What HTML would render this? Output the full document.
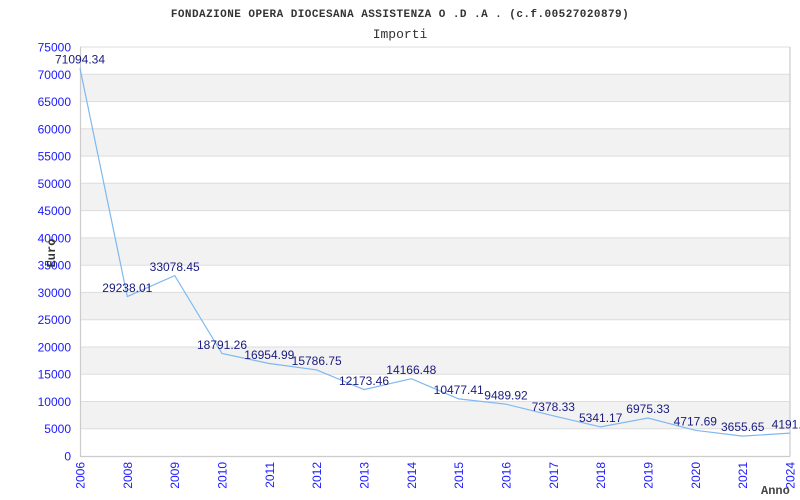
<!DOCTYPE html>
<html><head><meta charset="utf-8"><style>
html,body{margin:0;padding:0;background:#fff;width:800px;height:500px;overflow:hidden}
</style></head><body>
<svg width="800" height="500" xmlns="http://www.w3.org/2000/svg">
<rect width="800" height="500" fill="#fff"/>
<g fill="#f2f2f2">
<rect x="80" y="401.5" width="710" height="27.3"/>
<rect x="80" y="347" width="710" height="27.3"/>
<rect x="80" y="292.4" width="710" height="27.3"/>
<rect x="80" y="237.9" width="710" height="27.3"/>
<rect x="80" y="183.3" width="710" height="27.3"/>
<rect x="80" y="128.8" width="710" height="27.3"/>
<rect x="80" y="74.3" width="710" height="27.3"/>
</g>
<g stroke="#dddddd" stroke-width="1">
<line x1="80" y1="428.7" x2="790" y2="428.7"/><line x1="80" y1="401.5" x2="790" y2="401.5"/>
<line x1="80" y1="374.2" x2="790" y2="374.2"/><line x1="80" y1="347" x2="790" y2="347"/>
<line x1="80" y1="319.7" x2="790" y2="319.7"/><line x1="80" y1="292.4" x2="790" y2="292.4"/>
<line x1="80" y1="265.2" x2="790" y2="265.2"/><line x1="80" y1="237.9" x2="790" y2="237.9"/>
<line x1="80" y1="210.6" x2="790" y2="210.6"/><line x1="80" y1="183.3" x2="790" y2="183.3"/>
<line x1="80" y1="156.1" x2="790" y2="156.1"/><line x1="80" y1="128.8" x2="790" y2="128.8"/>
<line x1="80" y1="101.6" x2="790" y2="101.6"/><line x1="80" y1="74.3" x2="790" y2="74.3"/>
<line x1="80" y1="47" x2="790" y2="47"/>
</g>
<g stroke="#cccccc" stroke-width="1.2" fill="none">
<line x1="80.5" y1="47" x2="80.5" y2="456.5"/><line x1="80" y1="456.5" x2="790" y2="456.5"/><line x1="790" y1="47" x2="790" y2="456.5"/>
</g>
<polyline fill="none" stroke="#7fb8f0" stroke-width="1.2" points="80,68.3 127.3,296.6 174.7,275.6 222,353.5 269.3,363.5 316.7,369.9 364,389.6 411.3,378.7 458.7,398.9 506,404.2 553.3,415.8 600.7,426.9 648,418 695.3,430.3 742.7,436.1 790,433.1"/>
<g font-family="Liberation Sans, sans-serif" font-size="12" fill="#1a1a80" text-anchor="middle">
<text x="80" y="63.5">71094.34</text><text x="127.3" y="292">29238.01</text><text x="174.7" y="271">33078.45</text>
<text x="222" y="349">18791.26</text><text x="269.3" y="359">16954.99</text><text x="316.7" y="365">15786.75</text>
<text x="364" y="385">12173.46</text><text x="411.3" y="374">14166.48</text><text x="458.7" y="394">10477.41</text>
<text x="506" y="399.5">9489.92</text><text x="553.3" y="411">7378.33</text><text x="600.7" y="422">5341.17</text>
<text x="648" y="413">6975.33</text><text x="695.3" y="425.5">4717.69</text><text x="742.7" y="431">3655.65</text>
<text x="790" y="428.5">4191.4</text>
</g>
<g font-family="Liberation Sans, sans-serif" font-size="12" fill="#1a1aff" text-anchor="end">
<text x="71" y="460.5">0</text><text x="71" y="433">5000</text><text x="71" y="406">10000</text><text x="71" y="378.5">15000</text>
<text x="71" y="351.5">20000</text><text x="71" y="324">25000</text><text x="71" y="297">30000</text><text x="71" y="269.5">35000</text>
<text x="71" y="242.5">40000</text><text x="71" y="215">45000</text><text x="71" y="188">50000</text><text x="71" y="160.5">55000</text>
<text x="71" y="133.5">60000</text><text x="71" y="106">65000</text><text x="71" y="79">70000</text><text x="71" y="51.5">75000</text>
</g>
<g font-family="Liberation Sans, sans-serif" font-size="12" fill="#1a1aff" text-anchor="end">
<text transform="translate(84.5,462) rotate(-90)">2006</text>
<text transform="translate(131.8,462) rotate(-90)">2008</text>
<text transform="translate(179.2,462) rotate(-90)">2009</text>
<text transform="translate(226.5,462) rotate(-90)">2010</text>
<text transform="translate(273.8,462) rotate(-90)">2011</text>
<text transform="translate(321.2,462) rotate(-90)">2012</text>
<text transform="translate(368.5,462) rotate(-90)">2013</text>
<text transform="translate(415.8,462) rotate(-90)">2014</text>
<text transform="translate(463.2,462) rotate(-90)">2015</text>
<text transform="translate(510.5,462) rotate(-90)">2016</text>
<text transform="translate(557.8,462) rotate(-90)">2017</text>
<text transform="translate(605.2,462) rotate(-90)">2018</text>
<text transform="translate(652.5,462) rotate(-90)">2019</text>
<text transform="translate(699.8,462) rotate(-90)">2020</text>
<text transform="translate(747.2,462) rotate(-90)">2021</text>
<text transform="translate(794.5,462) rotate(-90)">2024</text>
</g>
<text x="400" y="17" text-anchor="middle" font-family="Liberation Mono, monospace" font-size="11" font-weight="bold" letter-spacing="0.45" fill="#333">FONDAZIONE OPERA DIOCESANA ASSISTENZA O .D .A . (c.f.00527020879)</text>
<text x="400" y="38" text-anchor="middle" font-family="Liberation Mono, monospace" font-size="13" fill="#333">Importi</text>
<text transform="translate(55,253) rotate(-90)" text-anchor="middle" font-family="Liberation Mono, monospace" font-size="12" font-weight="bold" fill="#333">Euro</text>
<text x="761" y="494" font-family="Liberation Mono, monospace" font-size="12" font-weight="bold" fill="#444">Anno</text>
</svg>
</body></html>
